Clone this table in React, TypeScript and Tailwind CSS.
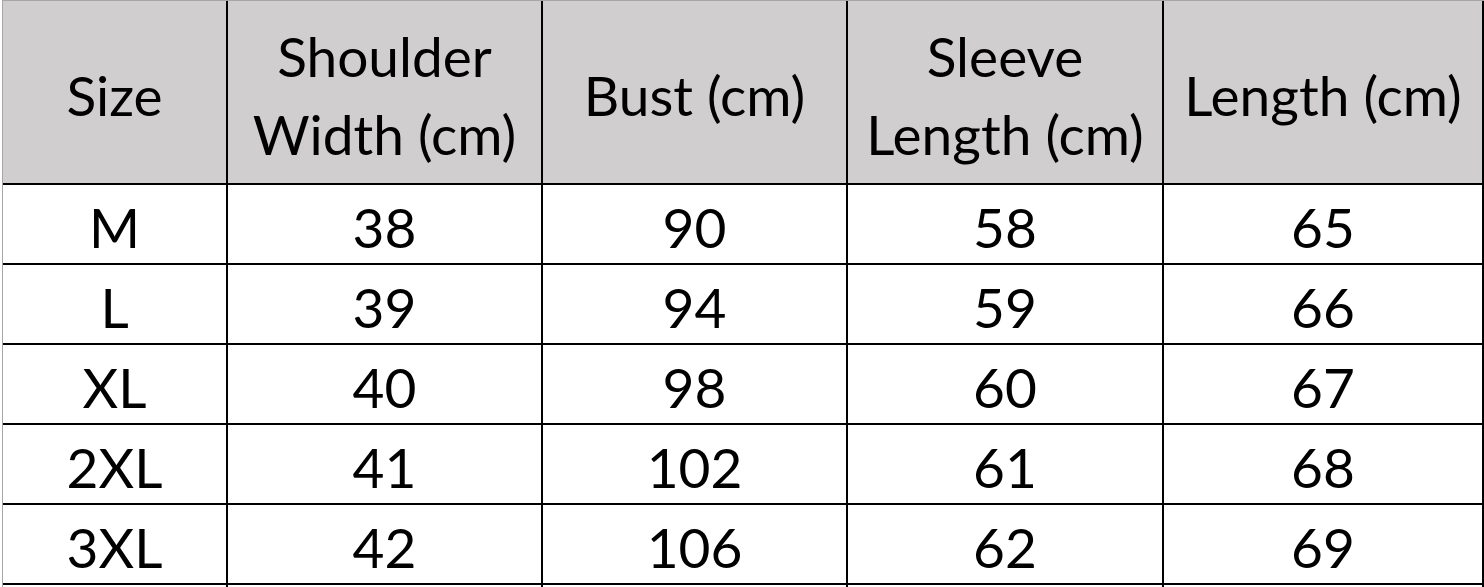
const headers = ["Size", "Shoulder\nWidth (cm)", "Bust (cm)", "Sleeve\nLength (cm)", "Length (cm)"];

const rows = [
  ["M", "38", "90", "58", "65"],
  ["L", "39", "94", "59", "66"],
  ["XL", "40", "98", "60", "67"],
  ["2XL", "41", "102", "61", "68"],
  ["3XL", "42", "106", "62", "69"],
  ["", "", "", "", ""],
];

const widths = ["w-[225px]", "w-[315px]", "w-[305px]", "w-[316px]", "w-[320px]"];

export default function App() {
  return (
    <div
      className="w-[1484px] h-[587px] overflow-hidden bg-white text-black"
      style={{ fontFamily: "Lato, 'Open Sans', sans-serif" }}
    >
      <div className="ml-[2px] border-l border-t border-[#a6a6a6]">
        <div className="flex h-[184px] bg-[#d0cece]">
          {headers.map((h, i) => (
            <div
              key={i}
              className={`${widths[i]} shrink-0 flex flex-col items-center justify-center border-r-2 border-b-2 border-black text-[55px] leading-[78px] pt-[6px]`}
            >
              {h.split("\n").map((line) => (
                <span key={line}>{line}</span>
              ))}
            </div>
          ))}
        </div>
        {rows.map((r, ri) => (
          <div key={ri} className="flex h-[80px]">
            {r.map((c, ci) => (
              <div
                key={ci}
                className={`${widths[ci]} shrink-0 flex items-center justify-center border-r-2 border-b-2 border-black text-[55px] pt-[6px]`}
              >
                {c}
              </div>
            ))}
          </div>
        ))}
      </div>
    </div>
  );
}
